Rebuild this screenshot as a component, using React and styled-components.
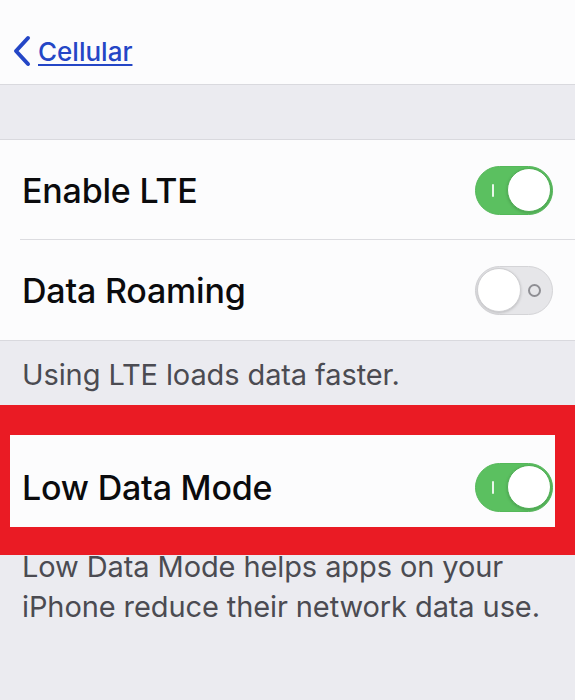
import React, { useState } from 'react';
import styled, { createGlobalStyle } from 'styled-components';

const GlobalStyle = createGlobalStyle`
  html, body {
    margin: 0;
    padding: 0;
    background: #ebebf0;
  }
  * {
    box-sizing: border-box;
  }
`;

const Page = styled.div`
  width: 575px;
  min-height: 700px;
  background: #ebebf0;
  font-family: Inter, "Noto Sans", "Liberation Sans", sans-serif;
  overflow: hidden;
`;

const NavBar = styled.header`
  height: 85px;
  background: #fcfcfd;
  border-bottom: 1px solid #d9d9de;
  display: flex;
  align-items: center;
  padding: 18px 0 0 12px;
`;

const BackLink = styled.a`
  display: flex;
  align-items: center;
  gap: 6px;
  color: #2446c6;
  font-size: 26px;
  font-weight: 500;
  text-decoration: underline;
  text-decoration-thickness: 2px;
  text-underline-offset: 3px;
  cursor: pointer;
`;

const Spacer = styled.div`
  height: ${(p) => p.$h}px;
`;

const Group = styled.section`
  background: #fcfcfd;
  border-top: 1px solid #d9d9de;
  border-bottom: 1px solid #d9d9de;
`;

const Row = styled.div`
  height: ${(p) => p.$h || 100}px;
  display: flex;
  align-items: center;
  justify-content: space-between;
  padding: ${(p) => p.$pad || '0 22px 0 22px'};
  position: relative;

  & + &::before {
    content: '';
    position: absolute;
    top: -1px;
    left: 20px;
    right: 0;
    height: 1px;
    background: #dcdce0;
  }
`;

const Label = styled.span`
  font-size: 34px;
  font-weight: 500;
  color: #0b0b0d;
  letter-spacing: -0.2px;
`;

const Footer = styled.p`
  margin: ${(p) => p.$m || '0'};
  padding: 0 22px;
  font-size: 29px;
  line-height: 40px;
  color: #4b4b52;
  letter-spacing: -0.1px;
`;

const Highlight = styled.div`
  background: #ea1b24;
  padding: 30px 20px 28px 10px;
`;

const HighlightInner = styled.div`
  background: #fcfcfd;
`;

const Track = styled.button`
  width: 78px;
  height: 49px;
  border-radius: 25px;
  border: 1.5px solid ${(p) => (p.$on ? '#55b85a' : '#d4d4d7')};
  background: ${(p) => (p.$on ? '#5bc060' : '#e6e6e9')};
  position: relative;
  padding: 0;
  cursor: pointer;
  flex-shrink: 0;
`;

const Knob = styled.span`
  position: absolute;
  top: 1px;
  left: ${(p) => (p.$on ? '31px' : '1px')};
  width: 44px;
  height: 44px;
  border-radius: 50%;
  background: #ffffff;
  border: 1px solid ${(p) => (p.$on ? '#4fae54' : '#cfcfd2')};
  box-shadow: 0 1px 3px rgba(0, 0, 0, 0.18);
`;

const OnMark = styled.span`
  position: absolute;
  left: 16px;
  top: 17px;
  width: 2px;
  height: 13px;
  background: #e9f7ea;
  border-radius: 1px;
`;

const OffMark = styled.span`
  position: absolute;
  right: 11px;
  top: 17px;
  width: 13px;
  height: 13px;
  border-radius: 50%;
  border: 2px solid #8e8e93;
`;

function Toggle({ on, onChange }) {
  return (
    <Track $on={on} onClick={() => onChange(!on)} aria-pressed={on}>
      {on ? <OnMark /> : <OffMark />}
      <Knob $on={on} />
    </Track>
  );
}

function Chevron() {
  return (
    <svg width="20" height="32" viewBox="0 0 20 32">
      <path
        d="M16 3 L4 16 L16 29"
        fill="none"
        stroke="#2446c6"
        strokeWidth="4"
        strokeLinecap="round"
        strokeLinejoin="round"
      />
    </svg>
  );
}

export default function App() {
  const [lte, setLte] = useState(true);
  const [roaming, setRoaming] = useState(false);
  const [lowData, setLowData] = useState(true);

  return (
    <Page>
      <GlobalStyle />
      <NavBar>
        <BackLink>
          <Chevron />
          Cellular
        </BackLink>
      </NavBar>
      <Spacer $h={54} />
      <Group>
        <Row>
          <Label>Enable LTE</Label>
          <Toggle on={lte} onChange={setLte} />
        </Row>
        <Row>
          <Label>Data Roaming</Label>
          <Toggle on={roaming} onChange={setRoaming} />
        </Row>
      </Group>
      <Footer $m="14px 0 10px">Using LTE loads data faster.</Footer>
      <Highlight>
        <HighlightInner>
          <Row $h={92} $pad="12px 2px 0 12px">
            <Label>Low Data Mode</Label>
            <Toggle on={lowData} onChange={setLowData} />
          </Row>
        </HighlightInner>
      </Highlight>
      <Footer $m="-8px 0 0">
        Low Data Mode helps apps on your
        <br />
        iPhone reduce their network data use.
      </Footer>
    </Page>
  );
}
